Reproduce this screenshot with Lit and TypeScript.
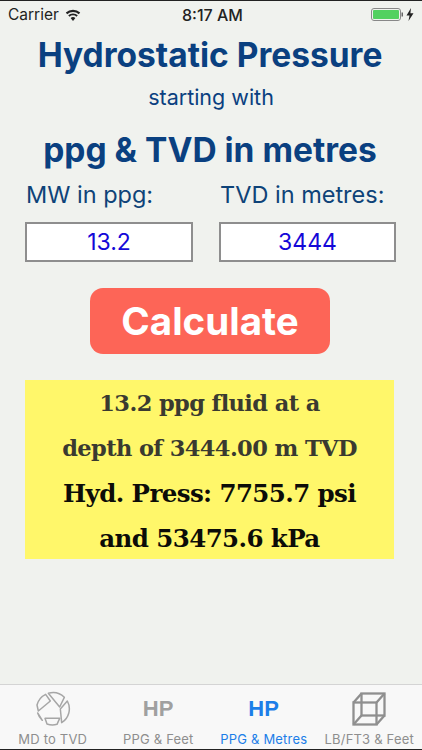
import { LitElement, html, css, svg } from "lit";
import { customElement } from "lit/decorators.js";

const aperture = svg`<svg class="ic" width="36" height="36" viewBox="30 6 108 108" fill="none" stroke="#a6a6a6" stroke-width="4.5" stroke-linejoin="round">
<path d="M62 16 A49 49 0 0 0 36 48 L40 66 L76 36 Z"/>
<path d="M70 13 A49 49 0 0 1 118 25 L104 54 Z"/>
<path d="M127 36 A49 49 0 0 1 110 101 L106 60 Z"/>
<path d="M60 88 L104 88 L96 106 A49 49 0 0 1 66 105 Z"/>
<path d="M38 72 L52 94 A49 49 0 0 1 38 72 Z"/>
</svg>`;

const cube = svg`<svg class="ic" width="34" height="34" viewBox="0 0 34 34" fill="none" stroke="#8f8f8f" stroke-width="2.3">
<rect x="1.5" y="10.5" width="23" height="22"/>
<rect x="9.5" y="1.5" width="23" height="22"/>
<path d="M1.5 10.5 L9.5 1.5 M24.5 10.5 L32.5 1.5 M1.5 32.5 L9.5 23.5 M24.5 32.5 L32.5 23.5"/>
</svg>`;

@customElement("app-root")
export class AppRoot extends LitElement {
  static styles = css`
    :host {
      display: flex;
      flex-direction: column;
      width: 422px;
      height: 750px;
      background: #f0f2ee;
      font-family: Inter, "Liberation Sans", Arial, sans-serif;
      overflow: hidden;
      box-sizing: border-box;
      border-top: 1px solid #222;
      border-bottom: 1px solid #222;
    }
    .status {
      display: grid;
      grid-template-columns: 1fr auto 1fr;
      align-items: center;
      height: 28px;
      padding: 0 8px 1px;
      box-sizing: border-box;
      font-size: 15.5px;
      color: #222;
    }
    .status .l { display: flex; align-items: center; gap: 6px; }
    .status .t { font-weight: 500; font-size: 16px; margin-left: 3px; }
    .status .r { display: flex; justify-content: flex-end; align-items: center; gap: 3px; }
    .main { flex: 1; display: flex; flex-direction: column; align-items: center; }
    .title {
      margin: 5px 0 0 -2px;
      height: 42px;
      line-height: 42px;
      font-size: 33.5px;
      font-weight: 700;
      color: #0a4080;
    }
    .sub {
      margin-top: 6px;
      height: 30px;
      line-height: 30px;
      font-size: 21.5px;
      color: #0a4080;
    }
    .title2 { margin-top: 17px; }
    .fields {
      display: grid;
      grid-template-columns: 168px 177px;
      column-gap: 26px;
      margin-top: 9px;
      margin-left: -1px;
    }
    .lab {
      font-size: 23.5px;
      line-height: 30px;
      color: #0e4378;
      padding-left: 1px;
      height: 42px;
    }
    .inp {
      box-sizing: border-box;
      height: 40px;
      background: #fff;
      border: 2px solid #8e8e8e;
      display: flex;
      align-items: center;
      justify-content: center;
      font-size: 23px;
      color: #1408d8;
    }
    .btn {
      margin-top: 26px;
      margin-left: -2px;
      width: 240px;
      height: 66px;
      border-radius: 13px;
      background: #fd6557;
      color: #fff;
      font-size: 38.5px;
      font-weight: 700;
      display: flex;
      align-items: center;
      justify-content: center;
    }
    .res {
      margin-top: 26px;
      margin-left: -3px;
      width: 369px;
      height: 179px;
      background: #fff76a;
      box-sizing: border-box;
      padding-top: 1px;
      font-family: "DejaVu Serif", "Liberation Serif", serif;
      font-weight: 700;
      text-align: center;
    }
    .res div { height: 45px; line-height: 45px; white-space: nowrap; }
    .a { font-size: 22.5px; letter-spacing: -0.6px; color: #3a3a30; }
    .b { font-size: 24.5px; letter-spacing: -0.6px; color: #0c0c08; }
    .tabs {
      height: 65px;
      box-sizing: border-box;
      border-top: 1px solid #d4d4d4;
      background: #f8f8f8;
      display: grid;
      grid-template-columns: repeat(4, 1fr);
    }
    .tab {
      display: flex;
      flex-direction: column;
      align-items: center;
      color: #8e8e8e;
      font-size: 13px;
      letter-spacing: 0.2px;
      padding-top: 6px;
    }
    .tab span { line-height: 15px; white-space: nowrap; }
    .tab.on { color: #1c7ee8; }
    .ico { height: 36px; display: flex; align-items: center; justify-content: center; margin-bottom: 5px; }
    .hp { font-family: "Liberation Sans", Arial, sans-serif; font-size: 22px; font-weight: 700; color: #a0a0a0; }
    .on .hp { color: #1c7ee8; }
  `;

  render() {
    return html`
      <div class="status">
        <div class="l"><span>Carrier</span>
          <svg width="16" height="12" viewBox="0 0 16 12" fill="#222">
            <path d="M8 12 L5.6 9 A3.6 3.6 0 0 1 10.4 9 Z"/>
            <path d="M4.5 7.8 L3.2 6.3 A7 7 0 0 1 12.8 6.3 L11.5 7.8 A5 5 0 0 0 4.5 7.8 Z"/>
            <path d="M2.2 5.2 L0.8 3.6 A10.6 10.6 0 0 1 15.2 3.6 L13.8 5.2 A8.6 8.6 0 0 0 2.2 5.2 Z"/>
          </svg>
        </div>
        <div class="t">8:17 AM</div>
        <div class="r">
          <svg width="32" height="13" viewBox="0 0 32 13">
            <rect x="0.5" y="0.5" width="29" height="12" rx="2.5" fill="none" stroke="#888"/>
            <rect x="2" y="2" width="26" height="9" rx="1" fill="#52d160"/>
            <rect x="30.5" y="4.5" width="1.5" height="4" fill="#666"/>
          </svg>
          <svg width="8" height="13" viewBox="0 0 8 13" fill="#222"><path d="M5 0 L0.5 7.5 H3.5 L2.5 13 L7.5 5.2 H4.4 Z"/></svg>
        </div>
      </div>
      <div class="main">
        <div class="title">Hydrostatic Pressure</div>
        <div class="sub">starting with</div>
        <div class="title title2">ppg &amp; TVD in metres</div>
        <div class="fields">
          <div class="lab">MW in ppg:</div>
          <div class="lab">TVD in metres:</div>
          <div class="inp">13.2</div>
          <div class="inp">3444</div>
        </div>
        <div class="btn">Calculate</div>
        <div class="res">
          <div class="a">13.2 ppg fluid at a</div>
          <div class="a">depth of 3444.00 m TVD</div>
          <div class="b">Hyd. Press: 7755.7 psi</div>
          <div class="b">and 53475.6 kPa</div>
        </div>
      </div>
      <div class="tabs">
        <div class="tab"><div class="ico">${aperture}</div><span>MD to TVD</span></div>
        <div class="tab"><div class="ico"><div class="hp">HP</div></div><span>PPG &amp; Feet</span></div>
        <div class="tab on"><div class="ico"><div class="hp">HP</div></div><span>PPG &amp; Metres</span></div>
        <div class="tab"><div class="ico">${cube}</div><span>LB/FT3 &amp; Feet</span></div>
      </div>
    `;
  }
}
